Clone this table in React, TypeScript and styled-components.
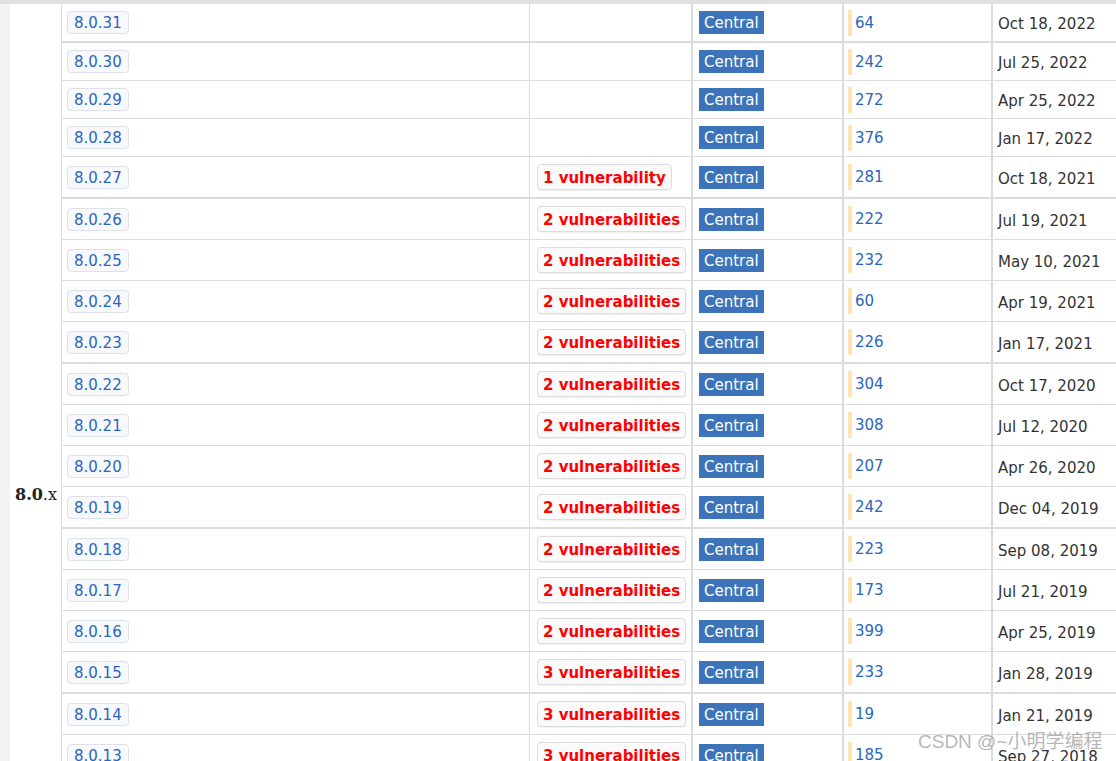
import { createGlobalStyle, styled } from 'styled-components';

interface IRelease {
    version: string
    vulns: number
    usages: number
    date: string
}

const releases: IRelease[] = [
    { version: '8.0.31', vulns: 0, usages: 64, date: 'Oct 18, 2022' },
    { version: '8.0.30', vulns: 0, usages: 242, date: 'Jul 25, 2022' },
    { version: '8.0.29', vulns: 0, usages: 272, date: 'Apr 25, 2022' },
    { version: '8.0.28', vulns: 0, usages: 376, date: 'Jan 17, 2022' },
    { version: '8.0.27', vulns: 1, usages: 281, date: 'Oct 18, 2021' },
    { version: '8.0.26', vulns: 2, usages: 222, date: 'Jul 19, 2021' },
    { version: '8.0.25', vulns: 2, usages: 232, date: 'May 10, 2021' },
    { version: '8.0.24', vulns: 2, usages: 60, date: 'Apr 19, 2021' },
    { version: '8.0.23', vulns: 2, usages: 226, date: 'Jan 17, 2021' },
    { version: '8.0.22', vulns: 2, usages: 304, date: 'Oct 17, 2020' },
    { version: '8.0.21', vulns: 2, usages: 308, date: 'Jul 12, 2020' },
    { version: '8.0.20', vulns: 2, usages: 207, date: 'Apr 26, 2020' },
    { version: '8.0.19', vulns: 2, usages: 242, date: 'Dec 04, 2019' },
    { version: '8.0.18', vulns: 2, usages: 223, date: 'Sep 08, 2019' },
    { version: '8.0.17', vulns: 2, usages: 173, date: 'Jul 21, 2019' },
    { version: '8.0.16', vulns: 2, usages: 399, date: 'Apr 25, 2019' },
    { version: '8.0.15', vulns: 3, usages: 233, date: 'Jan 28, 2019' },
    { version: '8.0.14', vulns: 3, usages: 19, date: 'Jan 21, 2019' },
    { version: '8.0.13', vulns: 3, usages: 185, date: 'Sep 27, 2018' },
]

const vulnText = (n: number) => n === 1 ? '1 vulnerability' : `${n} vulnerabilities`

const App = () => {
    return (
        <>
            <GlobalStyle />
            <Page>
                <TopBar />
                <Body>
                    <LeftStrip />
                    <GroupCol>
                        <GroupLabel><b>8.0</b>.x</GroupLabel>
                    </GroupCol>
                    <Rows>
                        {releases.map((r, i) => (
                            <Row key={r.version} $groupStart={i % 4 === 1} $first={i === 0} $tall={r.vulns > 0}>
                                <VersionCell>
                                    <VersionBtn href="#">{r.version}</VersionBtn>
                                </VersionCell>
                                <VulnCell>
                                    {r.vulns > 0 && <VulnBadge href="#">{vulnText(r.vulns)}</VulnBadge>}
                                </VulnCell>
                                <RepoCell>
                                    <RepoBadge>Central</RepoBadge>
                                </RepoCell>
                                <UsageCell>
                                    <UsageBar />
                                    <UsageLink href="#">{r.usages}</UsageLink>
                                </UsageCell>
                                <DateCell>{r.date}</DateCell>
                            </Row>
                        ))}
                    </Rows>
                </Body>
                <Watermark>CSDN @~小明学编程</Watermark>
            </Page>
        </>
    );
}

export default App;

const GlobalStyle = createGlobalStyle`
    html, body {
        margin: 0;
        padding: 0;
        background: #fff;
        overflow: hidden;
    }
    body {
        font-family: "DejaVu Sans", Verdana, sans-serif;
        font-size: 15px;
    }
`

const Page = styled.div`
    position: relative;
    width: 1116px;
    height: 761px;
    overflow: hidden;
`

const TopBar = styled.div`
    height: 4px;
    background: #e0e0e0;
`

const Body = styled.div`
    display: flex;
    align-items: stretch;
`

const LeftStrip = styled.div`
    width: 10px;
    flex-shrink: 0;
    background: #f3f3f3;
`

const GroupCol = styled.div`
    width: 52px;
    flex-shrink: 0;
    box-sizing: border-box;
    border-right: 1px solid #dcdcdc;
    padding: 482px 0 0 5px;
`

const GroupLabel = styled.div`
    font-family: "DejaVu Serif", "Liberation Serif", serif;
    font-size: 16px;
    line-height: 18px;
    color: #222;

    b {
        font-weight: 700;
    }
`

const Rows = styled.div`
    flex: 1;
    display: flex;
    flex-direction: column;
`

const Row = styled.div<{ $groupStart: boolean, $first: boolean, $tall: boolean }>`
    display: grid;
    grid-template-columns: 467px 162px 151px 149px 1fr;
    height: ${p => p.$tall ? 40 : 37}px;
    border-top: ${p => p.$first ? 0 : p.$groupStart ? 2 : 1}px solid #dcdcdc;
`

const Cell = styled.div`
    box-sizing: border-box;
    display: flex;
    align-items: center;
    height: 100%;
`

const VersionCell = styled(Cell)`
    padding-left: 5px;
`

const VulnCell = styled(Cell)`
    border-left: 1px solid #dcdcdc;
    padding-left: 7px;
`

const RepoCell = styled(Cell)`
    border-left: 2px solid #dcdcdc;
    padding-left: 6px;
`

const UsageCell = styled(Cell)`
    border-left: 2px solid #dcdcdc;
    padding-left: 4px;
    gap: 3px;
`

const DateCell = styled(Cell)`
    border-left: 2px solid #dcdcdc;
    padding: 3px 0 0 5px;
    color: #333;
    white-space: nowrap;
`

const VersionBtn = styled.a`
    display: inline-block;
    padding: 3px 6px 1px;
    line-height: 17px;
    border: 1px solid #dde1ea;
    border-radius: 4px;
    background: #f8f9fd;
    color: #2a66bd;
    text-decoration: none;
`

const VulnBadge = styled.a`
    display: inline-block;
    padding: 4px 5px 2px;
    line-height: 18px;
    border: 1px solid #dcdcdc;
    border-radius: 4px;
    background: #fafafb;
    box-shadow: 0 1px 1px rgba(0, 0, 0, 0.06);
    color: #f00;
    font-weight: 700;
    text-decoration: none;
    white-space: nowrap;
`

const RepoBadge = styled.span`
    display: inline-block;
    padding: 4px 5px 2px;
    line-height: 17px;
    background: #3c73b9;
    color: #fff;
`

const UsageBar = styled.span`
    display: inline-block;
    width: 4px;
    height: 26px;
    background: #ffe4b3;
`

const UsageLink = styled.a`
    color: #2a66bd;
    text-decoration: none;
    margin-top: 0;
`

const Watermark = styled.div`
    position: absolute;
    left: 918px;
    top: 730px;
    font-family: "Liberation Sans", "Noto Sans CJK SC", sans-serif;
    font-size: 19px;
    line-height: 24px;
    color: rgba(120, 120, 120, 0.55);
    white-space: nowrap;
    pointer-events: none;
`
